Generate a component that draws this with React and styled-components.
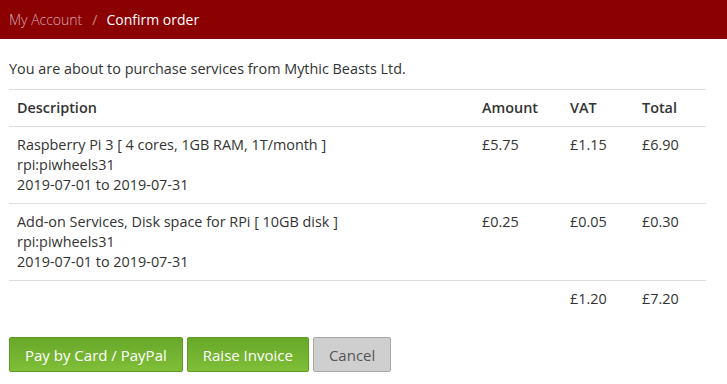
import React from "react";
import styled, { createGlobalStyle } from "styled-components";

const GlobalStyle = createGlobalStyle`
  body {
    margin: 0;
    background: #fff;
    font-family: "Open Sans", "Liberation Sans", sans-serif;
    font-size: 14.4px;
    color: #333;
  }
`;

const lines = [
  {
    id: 1,
    desc: ["Raspberry Pi 3 [ 4 cores, 1GB RAM, 1T/month ]", "rpi:piwheels31", "2019-07-01 to 2019-07-31"],
    amount: "£5.75",
    vat: "£1.15",
    total: "£6.90",
  },
  {
    id: 2,
    desc: ["Add-on Services, Disk space for RPi [ 10GB disk ]", "rpi:piwheels31", "2019-07-01 to 2019-07-31"],
    amount: "£0.25",
    vat: "£0.05",
    total: "£0.30",
  },
];

const App = () => {
  return (
    <>
      <GlobalStyle />
      <Header>
        <Crumb>My Account</Crumb>
        <Sep>/</Sep>
        <Current>Confirm order</Current>
      </Header>
      <Main>
        <Intro>You are about to purchase services from Mythic Beasts Ltd.</Intro>
        <Table>
          <colgroup>
            <col />
            <col style={{ width: 88 }} />
            <col style={{ width: 72 }} />
            <col style={{ width: 72 }} />
          </colgroup>
          <thead>
            <tr>
              <Th>Description</Th>
              <Th>Amount</Th>
              <Th>VAT</Th>
              <Th>Total</Th>
            </tr>
          </thead>
          <tbody>
            {lines.map((l) => (
              <tr key={l.id}>
                <Td>
                  {l.desc.map((d, i) => (
                    <div key={i}>{d}</div>
                  ))}
                </Td>
                <Td>{l.amount}</Td>
                <Td>{l.vat}</Td>
                <Td>{l.total}</Td>
              </tr>
            ))}
            <tr>
              <Td></Td>
              <Td></Td>
              <Td>£1.20</Td>
              <Td>£7.20</Td>
            </tr>
          </tbody>
        </Table>
        <Actions>
          <Button $variant="green">Pay by Card / PayPal</Button>
          <Button $variant="green">Raise Invoice</Button>
          <Button>Cancel</Button>
        </Actions>
      </Main>
    </>
  );
};

export default App;

const Header = styled.div`
  height: 39px;
  background: #8b0000;
  display: flex;
  align-items: center;
  padding: 0 9px;
  font-size: 14px;
`;

const Crumb = styled.span`
  color: #d6a8b8;
  font-weight: 300;
`;

const Sep = styled.span`
  color: #c98a8a;
  margin: 0 9px 0 10px;
`;

const Current = styled.span`
  color: #fff;
`;

const Main = styled.div`
  padding: 0 21px 0 9px;
`;

const Intro = styled.p`
  margin: 0;
  padding-top: 20px;
  line-height: 20px;
  margin-bottom: 10px;
`;

const Table = styled.table`
  width: 100%;
  table-layout: fixed;
  border-collapse: collapse;
  line-height: 20px;
`;

const Th = styled.th`
  text-align: left;
  font-weight: 600;
  padding: 8px;
  border-top: 1px solid #ddd;
  border-bottom: 1px solid #ddd;
  color: #333;
`;

const Td = styled.td`
  vertical-align: top;
  padding: 8px;
  border-top: 1px solid #ddd;
  white-space: nowrap;
  tr:first-child > & {
    border-top: none;
  }
`;

const Actions = styled.div`
  display: flex;
  gap: 4px;
  margin-top: 20px;
`;

const Button = styled.button`
  height: 35px;
  padding: 0 15px;
  font-family: "Open Sans", "Liberation Sans", sans-serif;
  font-size: 15px;
  border-radius: 2px;
  cursor: pointer;
  ${({ $variant }) =>
    $variant === "green"
      ? `
    background: linear-gradient(#68a82a, #7fbe37);
    border: 1px solid #5e9a24;
    color: #fff;
  `
      : `
    background: #cfcfcf;
    border: 1px solid #a8a8a8;
    color: #555;
  `}
`;
